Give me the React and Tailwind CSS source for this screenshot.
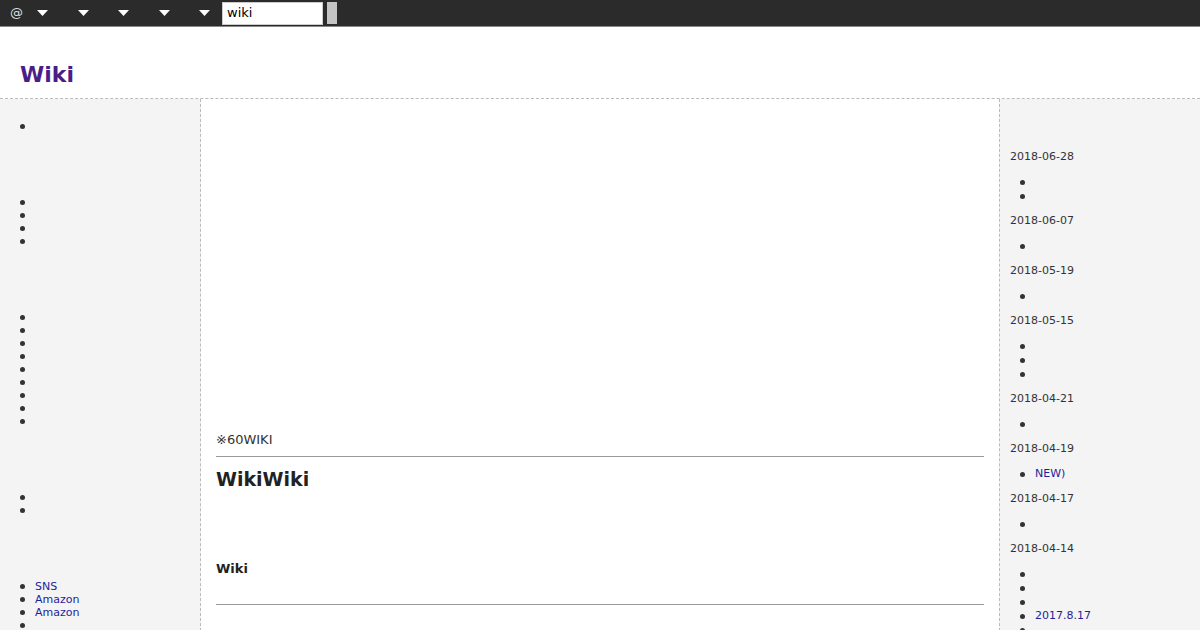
import React from 'react';

const font = { fontFamily: '"DejaVu Sans", "Noto Sans CJK JP", sans-serif' };

const Caret = () => (
  <svg width="11" height="7" viewBox="0 0 11 7" className="block">
    <path d="M0 0 L11 0 L5.5 6 Z" fill="#fff" />
  </svg>
);

const Dot = () => <span className="w-[5px] h-[5px] rounded-full bg-[#333] shrink-0" />;

const Bullets = ({ items, className = '' }) => (
  <ul className={`text-[11px] leading-[13px] ${className}`}>
    {items.map((t, i) => (
      <li key={i} className="h-[13px] flex items-center pl-[20px]">
        <Dot />
        <span className="ml-[10px] text-[#1f1f99]">{t}</span>
      </li>
    ))}
  </ul>
);

const RightGroup = ({ date, items }) => (
  <div className="mb-[11px]">
    <p className="text-[11px] leading-[13px] text-[#333] mb-[12px]">{date}</p>
    <ul className="text-[11px] leading-[14px]">
      {items.map((t, i) => (
        <li key={i} className="h-[14px] flex items-center pl-[10px]">
          <Dot />
          <span className="ml-[10px] text-[#1f1f99]">{t}</span>
        </li>
      ))}
    </ul>
  </div>
);

export default function App() {
  const recent = [
    { date: '2018-06-28', items: ['', ''] },
    { date: '2018-06-07', items: [''] },
    { date: '2018-05-19', items: [''] },
    { date: '2018-05-15', items: ['', '', ''] },
    { date: '2018-04-21', items: [''] },
    { date: '2018-04-19', items: ['NEW)'] },
    { date: '2018-04-17', items: [''] },
    { date: '2018-04-14', items: ['', '', '', '2017.8.17', ''] },
  ];

  return (
    <div className="w-[1200px] h-[630px] overflow-hidden bg-white text-[#333]" style={font}>
      {/* top bar */}
      <div className="h-[27px] bg-[#2b2b2b] border-b border-[#888] flex items-center">
        <span className="ml-[10px] text-[13px] text-[#ddd]">@</span>
        <div className="ml-[14px] flex items-center gap-[29.5px]">
          <Caret />
          <Caret />
          <Caret />
          <Caret />
          <Caret />
        </div>
        <div className="ml-[12px] w-[101px] h-[23px] bg-white border border-[#ccc] flex items-center px-[4px] text-[13px] text-black">
          wiki
        </div>
        <div className="ml-[4px] w-[10px] h-[22px] bg-[#c4c4c4]" />
      </div>

      {/* header */}
      <div className="h-[72px] border-b border-dashed border-[#bbb] flex items-end pb-[9px] pl-[20px]">
        <h1 className="text-[22px] font-bold text-[#4b1e87] leading-[28px]">Wiki</h1>
      </div>

      <div className="flex h-[532px]">
        {/* left sidebar */}
        <div className="w-[201px] bg-[#f4f4f4] border-r border-dashed border-[#bbb] pt-[21px]">
          <Bullets items={['']} />
          <Bullets className="mt-[63px]" items={['', '', '', '']} />
          <Bullets className="mt-[63px]" items={['', '', '', '', '', '', '', '', '']} />
          <Bullets className="mt-[63px]" items={['', '']} />
          <Bullets className="mt-[63px]" items={['SNS', 'Amazon', 'Amazon', '']} />
        </div>

        {/* main */}
        <div className="flex-1 px-[15px] pt-[332px]">
          <p className="text-[13px] leading-[18px] text-[#333]">※60WIKI</p>
          <div className="mt-[7px] h-px bg-[#999]" />
          <h2 className="mt-[10px] text-[19px] font-bold leading-[24px] text-[#222]">WikiWiki</h2>
          <h3 className="mt-[69px] text-[13px] font-bold leading-[18px] text-[#222]">Wiki</h3>
          <div className="mt-[26px] h-px bg-[#999]" />
        </div>

        {/* right sidebar */}
        <div className="w-[201px] bg-[#f4f4f4] border-l border-dashed border-[#bbb] pt-[51px] pl-[10px]">
          {recent.map((g) => (
            <RightGroup key={g.date} date={g.date} items={g.items} />
          ))}
        </div>
      </div>
    </div>
  );
}
